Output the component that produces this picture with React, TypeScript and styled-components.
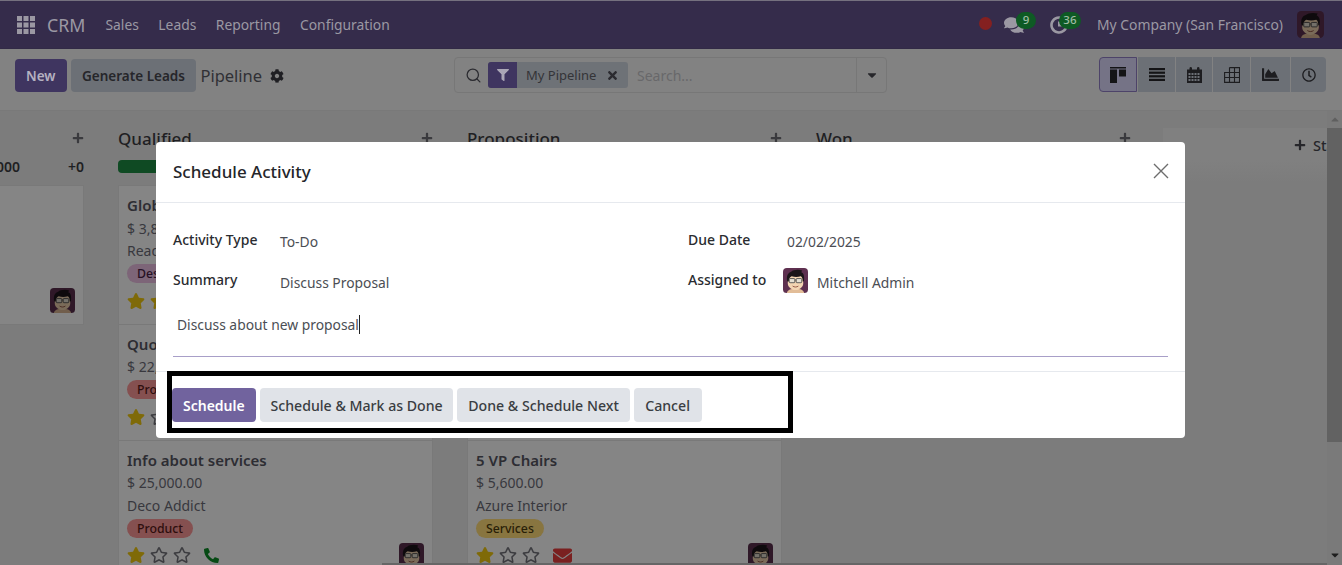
import React from "react";
import styled, { createGlobalStyle } from "styled-components";
import {
  FaCog, FaComments, FaStar, FaRegStar, FaPhone, FaEnvelope, FaFilter, FaTimes,
  FaCaretDown, FaPlus, FaChartArea, FaRegClock,
} from "react-icons/fa";
import { Search } from "lucide-react";

const Global = createGlobalStyle`
  html, body { margin: 0; padding: 0; background: #7c7c7c; overflow: hidden; }
  body { font-family: "Noto Sans", "Open Sans", sans-serif; font-size: 14px; color: #2b2b30; }
  * { box-sizing: border-box; }
`;

const Page = styled.div`
  position: relative; width: 1342px; height: 565px; overflow: hidden;
  display: flex; flex-direction: column;
`;

/* ---------- navbar ---------- */
const NavBar = styled.header`
  flex: 0 0 49px; display: flex; align-items: center; background: #352c4b;
  border-top: 1px solid #75717f; border-bottom: 1px solid #322a46; padding: 0 18px 0 17px;
`;
const AppBrand = styled.span`font-size: 17.8px; color: #9b98a3; margin: 0 20px 0 12px;`;
const NavLink = styled.span`font-size: 13.85px; color: #9b98a3; margin-right: 19.5px;`;
const NavRight = styled.div`margin-left: auto; display: flex; align-items: center;`;
const RedDot = styled.span`
  width: 13px; height: 13px; border-radius: 50%; background: #842020; margin-right: 12px; margin-top: -2px;
`;
const Systray = styled.span<{ $w: number }>`
  position: relative; width: ${p => p.$w}px; height: 26px; display: flex; align-items: center; color: #9b98a3;
`;
const NavBadge = styled.span<{ $left: number; $w: number }>`
  position: absolute; left: ${p => p.$left}px; top: 0; width: ${p => p.$w}px; height: 17px; border-radius: 9px;
  background: #0e5a24; color: #a0bda4; font-size: 11.5px; font-weight: 500; line-height: 16px; text-align: center;
`;
const Company = styled.span`font-size: 13.9px; color: #9b98a3; margin: 0 14px 0 0;`;

/* ---------- control panel ---------- */
const ControlPanel = styled.section`
  flex: 0 0 62px; display: flex; align-items: flex-start; background: #828282;
  border-bottom: 1px solid #797979; padding: 8px 16px 0 15px;
`;
const CpLeft = styled.div`flex: 0 0 439px; display: flex; align-items: center; margin-top: 2px; gap: 4.500px;`;
const CpButton = styled.button<{ $primary?: boolean }>`
  height: 33px; border: 0; border-radius: 4px; font: 600 13.5px "Noto Sans", sans-serif; padding: 0 11px;
  background: ${p => (p.$primary ? "#3f3560" : "#6c7076")};
  color: ${p => (p.$primary ? "#b5b1c0" : "#26262a")};
`;
const PipelineTitle = styled.span`font-size: 16.5px; color: #303035; margin-right: 3px;`;
const SearchBox = styled.div`
  flex: 0 0 433px; height: 36px; display: flex; align-items: center; border: 1px solid #777; border-radius: 4px; padding-left: 10px;
`;
const SearchIcon = styled.span`display: flex; color: #2b2b30; margin-right: 6px;`;
const Facet = styled.div`display: flex; align-items: center; height: 26px; background: #6e7277; border-radius: 3px; overflow: hidden; width: 140px;`;
const FacetIcon = styled.span`
  width: 29px; height: 26px; background: #3f3560; display: flex; align-items: center; justify-content: center; color: #aaa6b6;
`;
const FacetLabel = styled.span`font-size: 13px; color: #343438; margin: 0 10px 0 9px;`;
const FacetClose = styled.span`display: flex; color: #2b2b30;`;
const Placeholder = styled.span`font-size: 14px; color: #68686a; margin-left: 9px;`;
const SearchCaret = styled.span`
  margin-left: auto; width: 30px; height: 34px; border-left: 1px solid #777; display: flex; align-items: center; justify-content: center; color: #26262a;
`;
const ViewSwitcher = styled.div`margin-left: auto; display: flex; gap: 1px; height: 35px;`;
const ViewButton = styled.span<{ $w: number; $active?: boolean; $first?: boolean; $last?: boolean }>`
  width: ${p => p.$w}px; display: flex; align-items: center; justify-content: center; color: #1d1d20;
  background: ${p => (p.$active ? "#757386" : "#6c7076")};
  border: ${p => (p.$active ? "1px solid #4d4369" : "0")};
  border-radius: ${p => (p.$first ? "4px 0 0 4px" : p.$last ? "0 4px 4px 0" : "0")};
`;

/* ---------- kanban ---------- */
const BoardArea = styled.main`flex: 1; min-height: 0; display: flex; background: #7c7c7c; overflow: hidden;`;
const Board = styled.div`flex: 1; min-width: 0; overflow: hidden; display: flex; gap: 34px; padding-top: 17px; margin-left: -231px;`;
const Column = styled.section`flex: 0 0 315px; display: flex; flex-direction: column;`;
const ColumnHead = styled.div`
  display: flex; align-items: center; justify-content: space-between; height: 20px; color: #1f1f23; font-size: 17px; font-weight: 500;
`;
const PlusIcon = styled.span`display: flex; color: #3a3a3e;`;
const StatRow = styled.div`display: flex; align-items: center; height: 13px; margin-top: 12px; margin-bottom: 13px;`;
const Bar = styled.div`flex: 1; height: 13px; border-radius: 4px; background: #0f4a23;`;
const StatValue = styled.span`font-weight: 600; font-size: 14px; color: #1f1f23; margin-left: 8px;`;
const StatPlus = styled.span`font-weight: 600; font-size: 14px; color: #1f1f23; margin-left: 48px;`;
const Card = styled.article`
  background: #858585; border: 1px solid #797979; margin-top: -1px; padding: 9px 8px 10px; flex: none;
`;
const CardTitle = styled.div`font-size: 15px; font-weight: 600; line-height: 21px; color: #2d2d33; white-space: nowrap; height: 22.5px;`;
const CardLine = styled.div`font-size: 14px; line-height: 22.5px; height: 22.5px; color: #38383e; white-space: nowrap;`;
const TagRow = styled.div`height: 22.5px; display: flex; align-items: center;`;
const Tag = styled.span<{ $bg: string; $fg: string }>`
  display: inline-flex; align-items: center; height: 19px; padding: 0 10px; border-radius: 10px; font-size: 12.3px; font-weight: 500;
  background: ${p => p.$bg}; color: ${p => p.$fg};
`;
const CardFoot = styled.div`display: flex; align-items: center; height: 25.5px; margin-top: 3px; gap: 5px;`;
const Activity = styled.span<{ $color: string }>`display: flex; color: ${p => p.$color}; margin-left: 8px;`;
const CardAvatar = styled.span`margin-left: auto; display: flex;`;
const GoldStar = styled(FaStar)`color: #7f6a08; width: 18px; height: 18px;`;
const EmptyStar = styled(FaRegStar)`color: #3c3c40; width: 18px; height: 18px;`;
const StagePane = styled.aside`
  flex: 0 0 164px; margin-left: -2px; height: 54px; overflow: hidden; white-space: nowrap; display: flex; align-items: flex-start; gap: 7px; padding: 6.5px 0 0 131px;
  background: linear-gradient(#808080 60%, #7c7c7c);
  font-size: 14.5px; color: #26262a; font-weight: 500;
  svg { flex: none; margin-top: 4px; }
`;
const VScroll = styled.div`
  flex: 0 0 15px; display: flex; flex-direction: column; align-items: center; background: #7a7a7a;
`;
const ScrollArrow = styled.span<{ $dark?: boolean; $h: number }>`
  flex: 0 0 ${p => p.$h}px; display: flex; align-items: center; justify-content: center; width: 100%; color: ${p => (p.$dark ? "#1e1e1e" : "#5f5f5f")};
`;
const VThumb = styled.div`flex: 0 0 314px; width: 100%; background: #626262;`;
const VTrack = styled.div`flex: 1;`;
const HThumb = styled.div`position: absolute; left: 382px; right: 15px; bottom: 0; height: 2px; background: #666;`;

/* ---------- dialog ---------- */
const Modal = styled.div`
  position: absolute; left: 156px; top: 142px; width: 1029px; height: 296px; background: #fff; border-radius: 4px;
  display: flex; flex-direction: column; color: #3a3d42;
`;
const ModalHead = styled.div`
  flex: 0 0 61px; display: flex; align-items: center; justify-content: space-between; padding: 0 16px 2px 17px; border-bottom: 1px solid #e6e9ee;
`;
const ModalTitle = styled.h4`margin: 0; font-size: 17px; font-weight: 500; color: #24262a;`;
const CloseIcon = styled.svg`width: 16px; height: 16px; stroke: #6d6d6d; stroke-width: 1.4; fill: none;`;
const ModalBody = styled.div`flex: 1; padding: 23px 17px 0;`;
const FieldGrid = styled.div`display: grid; grid-template-columns: 515px 1fr; row-gap: 12.5px;`;
const Field = styled.div`display: flex; align-items: center; height: 28px;`;
const FieldLabel = styled.label<{ $w: number }>`flex: 0 0 ${p => p.$w}px; font-size: 14px; font-weight: 500; color: #2a2c30; padding-bottom: 2px;`;
const FieldValue = styled.span`font-size: 13.85px; color: #4b4e54; padding-top: 3px;`;
const UserCell = styled.span`display: flex; align-items: center; gap: 9px; margin-left: -4px;`;
const Note = styled.div`
  height: 42.5px; margin-top: 20px; padding: 0 0 0 4px; border-bottom: 1px solid #a89fc8; font-size: 13.85px; line-height: 20px; color: #4b4e54; white-space: nowrap;
`;
const Caret = styled.span`display: inline-block; width: 1px; height: 19px; background: #222; vertical-align: -4px;`;
const ModalFoot = styled.div`
  position: relative; flex: 0 0 67px; border-top: 1px solid #e6e9ee; display: flex; gap: 4px; padding: 16px 0 0 16px; align-items: flex-start;
`;
const FootButton = styled.button<{ $primary?: boolean }>`
  height: 34px; min-width: 68px; padding: 0 ${p => (p.$primary ? 11 : 10.75)}px; border: 0; border-radius: 4px;
  font: ${p => (p.$primary ? "600 14px" : "500 14.15px")} "Noto Sans", sans-serif;
  background: ${p => (p.$primary ? "#71639e" : "#e0e3e8")};
  color: ${p => (p.$primary ? "#fff" : "#3a3d42")};
`;
const Annotation = styled.div`
  position: absolute; left: 11px; top: -1px; width: 626px; height: 62px; border: 5px solid #000; pointer-events: none;
`;

const AvatarSvg = styled.svg<{ $dim?: boolean }>`
  display: block; flex: none; ${p => (p.$dim ? "filter: brightness(.5);" : "")}
`;
function Avatar({ size, dim }: { size: number; dim?: boolean }) {
  return (
    <AvatarSvg $dim={dim} width={size} height={size} viewBox="0 0 26 26">
      <rect width="26" height="26" rx="4" fill="#5e3050" />
      <path d="M4 26c.5-3 3.500-4.500 9-4.500s8.500 1.500 9 4.500z" fill="#e2bd98" />
      <path d="M5 10c0-3 3-4 8-4s8 1 8 4v6c0 4-4.500 7-8 7s-8-3-8-7z" fill="#f3d5b2" />
      <path d="M4.500 14C3 8 5.500 4.500 8.500 3.800 10.500 1.800 16 1.200 20 2.500c-.5.7-.9 1.300-1 1.800 2.700.8 3.500 4.500 2.700 9.700l-1.200-.2c0-2.800-.6-4.500-2-5.300-3 1-6.500 1-9.500 0-1.900.8-2.700 2.500-3 5.500z" fill="#1b1519" />
      <rect x="6.500" y="11" width="5.800" height="4.300" rx=".8" fill="#e6e0d2" stroke="#4a4a4a" strokeWidth=".9" />
      <rect x="13.700" y="11" width="5.800" height="4.300" rx=".8" fill="#e6e0d2" stroke="#4a4a4a" strokeWidth=".9" />
      <path d="M12.300 12.500h1.400" stroke="#4a4a4a" strokeWidth=".8" />
      <path d="M10 18.800c1.700 1.300 4.300 1.300 6 0" stroke="#8a4a3a" strokeWidth=".9" fill="none" />
    </AvatarSvg>
  );
}

const GridIcon = () => (
  <svg width="18" height="18" viewBox="0 0 18 18" fill="#9b98a3">
    {[0, 6.500, 13].map(y => [0, 6.500, 13].map(x => <rect key={`${x}-${y}`} x={x} y={y} width="5" height="5" />))}
  </svg>
);
const ActivityClock = () => (
  <svg width="18" height="18" viewBox="0 0 18 18" fill="none" stroke="#9b98a3" strokeWidth="2.600">
    <path d="M13.500 3A7.500 7.500 0 1 0 16.500 9" />
    <path d="M9 5.500V9.500h3" strokeWidth="2" />
  </svg>
);
const KanbanIcon = () => (
  <svg width="16" height="16" viewBox="0 0 16 16" fill="#141416">
    <rect x="0" y="0" width="16" height="1.500" />
    <rect x="0" y="2.500" width="7" height="13.500" />
    <rect x="9" y="2.500" width="7" height="7" />
  </svg>
);
const ListIcon = () => (
  <svg width="16" height="13" viewBox="0 0 16 13" fill="#141416">
    {[0, 3.600, 7.200, 10.800].map(y => <rect key={y} x="0" y={y} width="16" height="2.200" />)}
  </svg>
);
const CalendarIcon = () => (
  <svg width="15" height="16" viewBox="0 0 15 16" fill="#1d1d20">
    <path d="M0 2.500h2.500V1a1.300 1.300 0 0 1 2.500 0v1.500h5V1a1.300 1.300 0 0 1 2.500 0v1.500H15V16H0z" />
    <g fill="#6c7076">
      {[6, 9, 12].map(y => [1.500, 4.500, 7.500, 10.500].map(x => <rect key={`${x}${y}`} x={x} y={y} width="2" height="2" />))}
    </g>
  </svg>
);
const TableIcon = () => (
  <svg width="16" height="16" viewBox="0 0 16 16" fill="none" stroke="#1d1d20" strokeWidth="1.100">
    <path d="M5.500.6h10v14.800H.6V5.500h14.800M5.500.6v14.800M10.500.6v14.800M.6 10.500h14.800" />
  </svg>
);

function Stars({ n }: { n: number }) {
  return (
    <>
      {[0, 1, 2].map(i => (i < n ? <GoldStar key={i} /> : <EmptyStar key={i} />))}
    </>
  );
}

type Lead = {
  title: string; amount: string; customer?: string; tag: string; bg: string; fg: string;
  stars: number; act?: "phone" | "mail";
};

function LeadCard({ l }: { l: Lead }) {
  return (
    <Card>
      <CardTitle>{l.title}</CardTitle>
      <CardLine>{l.amount}</CardLine>
      {l.customer && <CardLine>{l.customer}</CardLine>}
      <TagRow><Tag $bg={l.bg} $fg={l.fg}>{l.tag}</Tag></TagRow>
      <CardFoot>
        <Stars n={l.stars} />
        {l.act === "phone" && <Activity $color="#064a14"><FaPhone size={15} style={{ transform: "scaleX(-1)" }} /></Activity>}
        {l.act === "mail" && <Activity $color="#7a2020"><FaEnvelope size={19} /></Activity>}
        <CardAvatar><Avatar size={25} dim /></CardAvatar>
      </CardFoot>
    </Card>
  );
}

const red = { bg: "#855050", fg: "#2e0e0d" };
const pink = { bg: "#7d6578", fg: "#261024" };
const gold = { bg: "#887540", fg: "#282007" };

const qualified: Lead[] = [
  { title: "Global Solutions: Furnitures", amount: "$ 3,800.00", customer: "Ready Mat", tag: "Design", ...pink, stars: 2 },
  { title: "Quote for 35 Chairs", amount: "$ 22,500.00", tag: "Product", ...red, stars: 1 },
  { title: "Info about services", amount: "$ 25,000.00", customer: "Deco Addict", tag: "Product", ...red, stars: 1, act: "phone" },
];
const proposition: Lead[] = [
  { title: "Modern Open Space", amount: "$ 4,500.00", customer: "Azure Interior", tag: "Design", ...pink, stars: 2 },
  { title: "Office Design", amount: "$ 9,000.00", tag: "Services", ...gold, stars: 1 },
  { title: "5 VP Chairs", amount: "$ 5,600.00", customer: "Azure Interior", tag: "Services", ...gold, stars: 1, act: "mail" },
];

function Col({ title, leads, value }: { title: string; leads: Lead[]; value?: string }) {
  return (
    <Column>
      <ColumnHead>{title}<PlusIcon><FaPlus size={12} /></PlusIcon></ColumnHead>
      <StatRow>
        <Bar />
        {value && <StatValue>{value}</StatValue>}
        {value && <StatPlus>+0</StatPlus>}
      </StatRow>
      {leads.map(l => <LeadCard key={l.title} l={l} />)}
    </Column>
  );
}

export default function App() {
  return (
    <Page>
      <Global />
      <NavBar>
        <GridIcon />
        <AppBrand>CRM</AppBrand>
        <NavLink>Sales</NavLink>
        <NavLink>Leads</NavLink>
        <NavLink>Reporting</NavLink>
        <NavLink>Configuration</NavLink>
        <NavRight>
          <RedDot />
          <Systray $w={46}>
            <FaComments size={20} />
            <NavBadge $left={12} $w={20}>9</NavBadge>
          </Systray>
          <Systray $w={47}>
            <ActivityClock />
            <NavBadge $left={9} $w={22}>36</NavBadge>
          </Systray>
          <Company>My Company (San Francisco)</Company>
          <Avatar size={27} dim />
        </NavRight>
      </NavBar>

      <ControlPanel>
        <CpLeft>
          <CpButton $primary>New</CpButton>
          <CpButton>Generate Leads</CpButton>
          <PipelineTitle>Pipeline</PipelineTitle>
          <FaCog size={14} color="#1f1f23" />
        </CpLeft>
        <SearchBox>
          <SearchIcon><Search size={17} strokeWidth={1.8} /></SearchIcon>
          <Facet>
            <FacetIcon><FaFilter size={12} /></FacetIcon>
            <FacetLabel>My Pipeline</FacetLabel>
            <FacetClose><FaTimes size={13} /></FacetClose>
          </Facet>
          <Placeholder>Search...</Placeholder>
          <SearchCaret><FaCaretDown size={14} /></SearchCaret>
        </SearchBox>
        <ViewSwitcher>
          <ViewButton $w={38} $active $first><KanbanIcon /></ViewButton>
          <ViewButton $w={37}><ListIcon /></ViewButton>
          <ViewButton $w={36}><CalendarIcon /></ViewButton>
          <ViewButton $w={37}><TableIcon /></ViewButton>
          <ViewButton $w={39}><FaChartArea size={17} /></ViewButton>
          <ViewButton $w={35} $last><FaRegClock size={14} /></ViewButton>
        </ViewSwitcher>
      </ControlPanel>

      <BoardArea>
        <Board>
          <Col title="New" value="$ 37,000" leads={[
            { title: "Open Desk", amount: "$ 35,000.00", customer: "Deco Addict", tag: "Design", ...pink, stars: 1 },
          ]} />
          <Col title="Qualified" leads={qualified} />
          <Col title="Proposition" leads={proposition} />
          <Col title="Won" leads={[]} />
          <StagePane><FaPlus size={12} />Stage</StagePane>
        </Board>
        <VScroll>
          <ScrollArrow $h={17}><FaCaretDown size={12} style={{ transform: "rotate(180deg)" }} /></ScrollArrow>
          <VThumb />
          <VTrack />
          <ScrollArrow $dark $h={20}><FaCaretDown size={12} /></ScrollArrow>
        </VScroll>
      </BoardArea>
      <HThumb />

      <Modal>
        <ModalHead>
          <ModalTitle>Schedule Activity</ModalTitle>
          <CloseIcon viewBox="0 0 16 16"><path d="M1 1l14 14M15 1L1 15" /></CloseIcon>
        </ModalHead>
        <ModalBody>
          <FieldGrid>
            <Field><FieldLabel $w={107}>Activity Type</FieldLabel><FieldValue>To-Do</FieldValue></Field>
            <Field><FieldLabel $w={99}>Due Date</FieldLabel><FieldValue>02/02/2025</FieldValue></Field>
            <Field><FieldLabel $w={107}>Summary</FieldLabel><FieldValue>Discuss Proposal</FieldValue></Field>
            <Field>
              <FieldLabel $w={99}>Assigned to</FieldLabel>
              <UserCell><Avatar size={25} /><FieldValue>Mitchell Admin</FieldValue></UserCell>
            </Field>
          </FieldGrid>
          <Note>Discuss about new proposal<Caret /></Note>
        </ModalBody>
        <ModalFoot>
          <FootButton $primary>Schedule</FootButton>
          <FootButton>Schedule &amp; Mark as Done</FootButton>
          <FootButton>Done &amp; Schedule Next</FootButton>
          <FootButton>Cancel</FootButton>
          <Annotation />
        </ModalFoot>
      </Modal>
    </Page>
  );
}
